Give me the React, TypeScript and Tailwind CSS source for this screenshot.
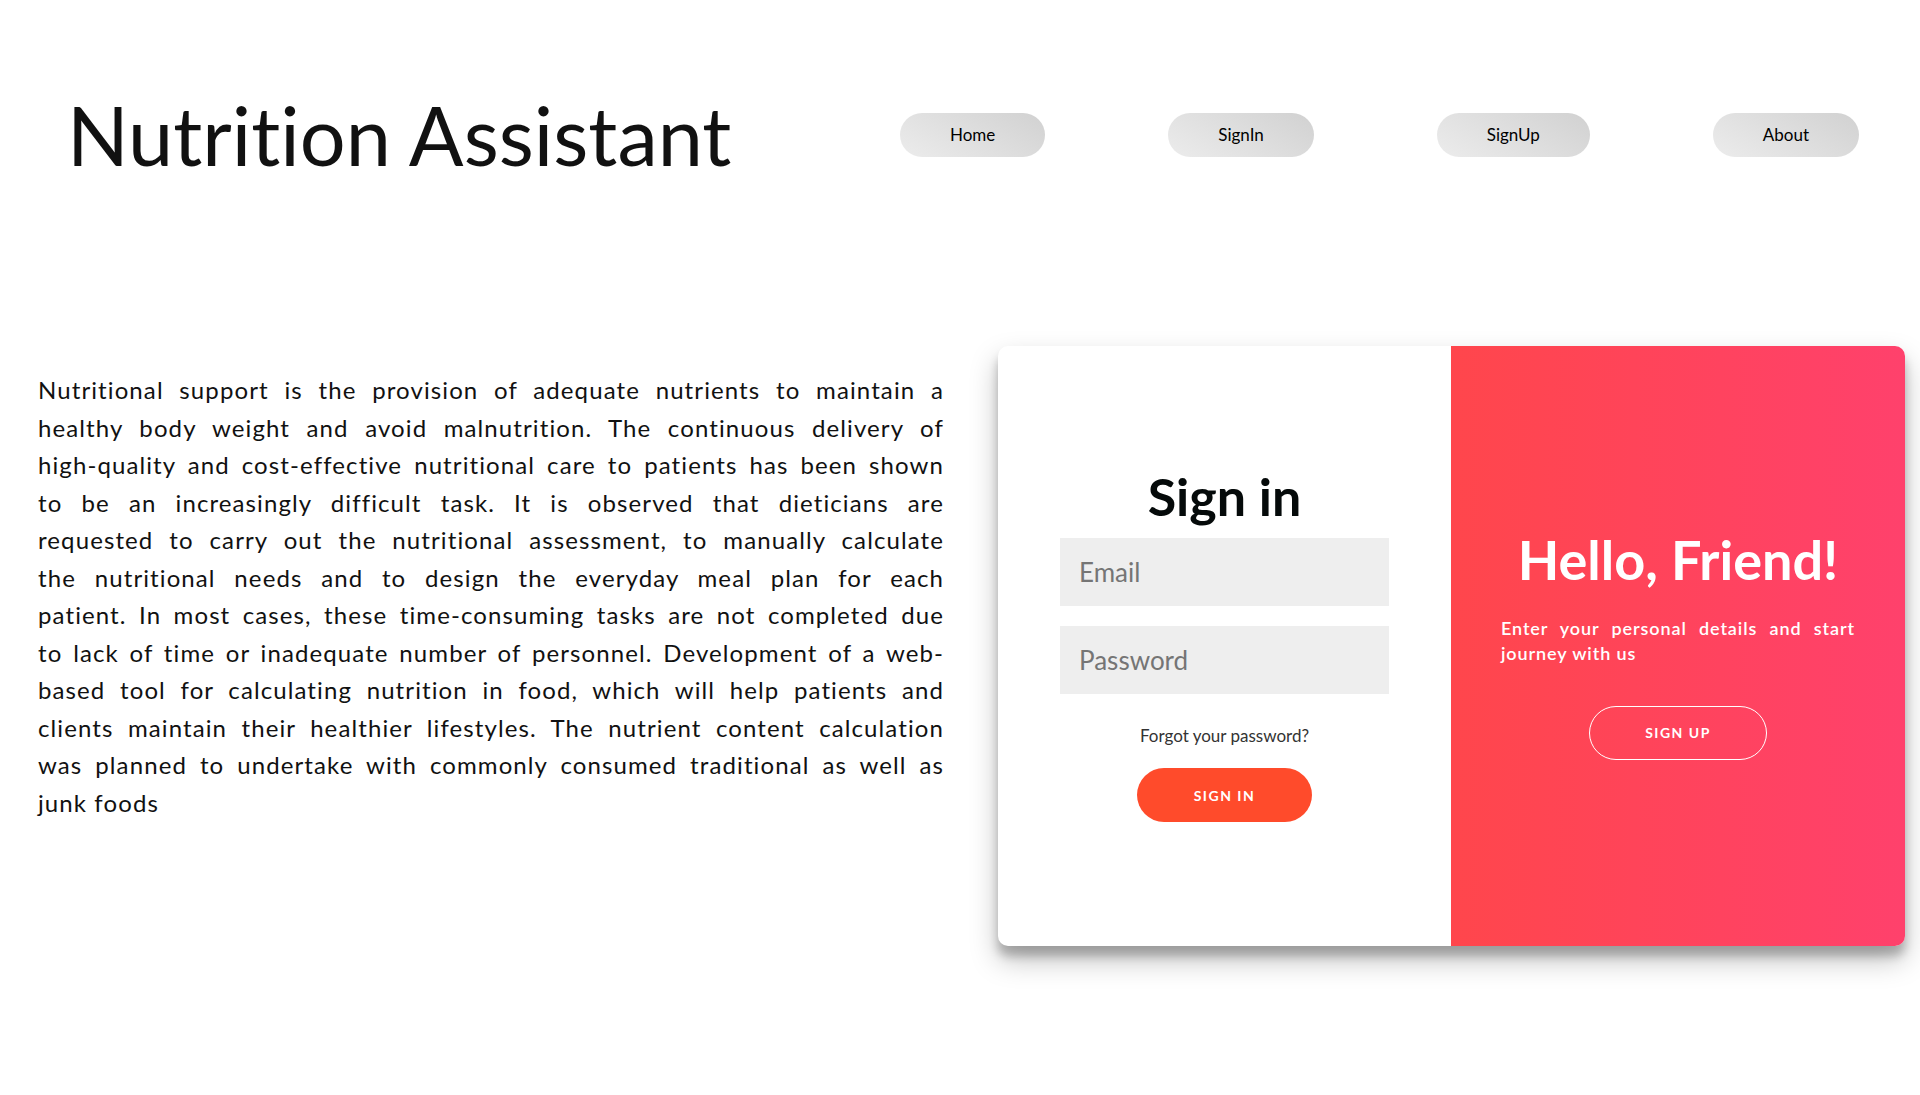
import React from "react";

const navItems = ["Home", "SignIn", "SignUp", "About"];

// line breaks follow the original layout
const intro = [
  "Nutritional support is the provision of adequate nutrients to maintain a",
  "healthy body weight and avoid malnutrition. The continuous delivery of",
  "high-quality and cost-effective nutritional care to patients has been shown",
  "to be an increasingly difficult task. It is observed that dieticians are",
  "requested to carry out the nutritional assessment, to manually calculate",
  "the nutritional needs and to design the everyday meal plan for each",
  "patient. In most cases, these time-consuming tasks are not completed due",
  "to lack of time or inadequate number of personnel. Development of a web-",
  "based tool for calculating nutrition in food, which will help patients and",
  "clients maintain their healthier lifestyles. The nutrient content calculation",
  "was planned to undertake with commonly consumed traditional as well as",
  "junk foods",
];

export default function App() {
  return (
    <div className="min-h-screen bg-white font-['Lato',sans-serif] text-black [font-variant-ligatures:none]">
      <header className="flex items-center justify-between pl-[67px] pr-[61px] pt-[94px]">
        <h1 className="text-[81px] leading-none text-[#111]">Nutrition Assistant</h1>
        <nav className="flex gap-[123px]">
          {navItems.map((item) => (
            <button
              key={item}
              className="h-[44px] px-[50px] rounded-full bg-[linear-gradient(30deg,#ececec,#d1d1d1)] text-[17px] text-black"
            >
              {item}
            </button>
          ))}
        </nav>
      </header>

      <main className="flex items-start justify-between pl-[38px] pr-[15px] mt-[171px]">
        <p className="w-[906px] mt-[25px] text-[24px] leading-[37.5px] tracking-[1.1px] text-[#111]">
          {intro.map((line, i) => (
            <span
              key={i}
              className={
                i < intro.length - 1
                  ? "block whitespace-nowrap text-justify [text-align-last:justify]"
                  : "block"
              }
            >
              {line}
            </span>
          ))}
        </p>

        {/* sign in card */}
        <div className="flex w-[907px] h-[600px] rounded-[10px] bg-white shadow-[0_14px_28px_rgba(0,0,0,0.25),0_10px_10px_rgba(0,0,0,0.22)]">
          <form className="flex w-[453px] flex-col items-center justify-center px-[62px]">
            <h2 className="text-[52px] font-bold leading-none mb-[16px] text-[#050a0a]">Sign in</h2>
            <input
              type="email"
              placeholder="Email"
              className="w-full h-[68px] bg-[#eeeeee] px-[19px] text-[26px] placeholder:text-[#757575] outline-none"
            />
            <input
              type="password"
              placeholder="Password"
              className="w-full h-[68px] mt-[20px] bg-[#eeeeee] px-[19px] text-[26px] placeholder:text-[#757575] outline-none"
            />
            <a href="#" className="mt-[29px] text-[17px] text-[#333]">
              Forgot your password?
            </a>
            <button
              type="button"
              className="mt-[20px] h-[54px] w-[175px] rounded-full bg-[#ff4b2b] text-[14px] font-bold uppercase tracking-[1.5px] text-white"
            >
              Sign In
            </button>
          </form>

          <div className="flex flex-1 flex-col items-center justify-center rounded-r-[10px] bg-[linear-gradient(to_right,#ff464c,#ff416c)] px-[50px] text-white">
            <h2 className="text-[54px] font-bold leading-none">Hello, Friend!</h2>
            <p className="mt-[29px] w-full text-justify text-[18px] font-semibold leading-[25px] tracking-[0.9px]">
              Enter your personal details and start journey with us
            </p>
            <button
              type="button"
              className="mt-[40px] h-[54px] w-[178px] rounded-full border border-white text-[14px] font-bold uppercase tracking-[1.5px] text-white"
            >
              Sign Up
            </button>
          </div>
        </div>
      </main>
    </div>
  );
}
